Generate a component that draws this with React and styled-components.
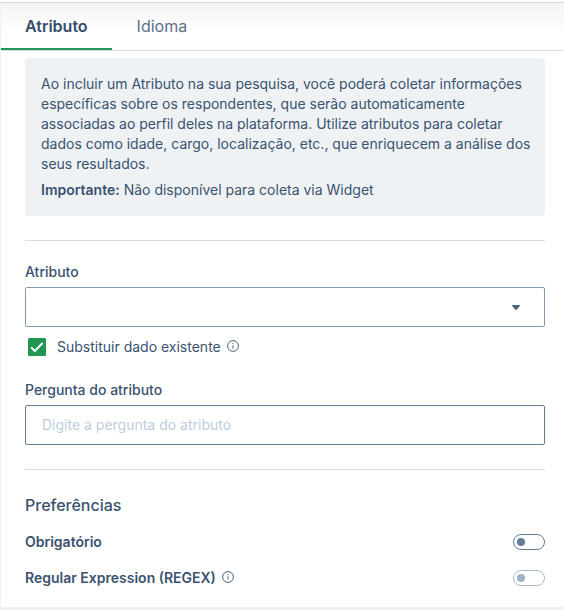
import React, { useState } from 'react';
import styled, { createGlobalStyle } from 'styled-components';

const GlobalStyle = createGlobalStyle`
    body {
        margin: 0;
        background: #eff2f5;
        color: #3a5270;
        font-family: Inter, "Liberation Sans", sans-serif;
        font-size: 14px;
        line-height: 20px;
    }
    * {
        box-sizing: border-box;
    }
`;

const Panel = styled.main`
    padding-top: 2px;
    background: #fff;
    border-left: 1px solid #edf1f6;
`;

const Tabs = styled.div`
    display: flex;
    gap: 1px;
    height: 49px;
    border-top: 1px solid #cfd9e7;
    border-bottom: 1px solid #d5deea;
    background: linear-gradient(#f4f4f5, #fff 32px);
`;

const Tab = styled.button`
    height: 47px;
    padding: 0 24px;
    border: 0;
    border-bottom: 2px solid ${(props) => (props.$active ? '#219653' : 'transparent')};
    background: none;
    color: ${(props) => (props.$active ? '#334d6e' : '#5a7089')};
    font-family: inherit;
    font-size: 16px;
    font-weight: ${(props) => (props.$active ? 600 : 400)};
    cursor: pointer;
`;

const Content = styled.div`
    padding: 7px 19px 19px 24px;
`;

const InfoBox = styled.section`
    padding: 16px 12px 16px 16px;
    border-radius: 4px;
    background: #eef2f5;
`;

const InfoText = styled.p`
    margin: 0;
    & + & {
        margin-top: 6px;
    }
`;

const Strong = styled.strong`
    font-weight: 600;
`;

const Divider = styled.hr`
    height: 1px;
    margin: 24px 0 0;
    border: 0;
    background: #d6dfea;
`;

const Field = styled.div`
    display: flex;
    flex-direction: column;
    gap: 5px;
    padding-top: 21px;
`;

const FieldLabel = styled.label`
    font-weight: 500;
`;

const SelectWrapper = styled.div`
    display: grid;
    align-items: center;
    & > * {
        grid-area: 1 / 1;
    }
`;

const Select = styled.select`
    width: 100%;
    height: 40px;
    padding: 0 40px 0 16px;
    border: 1px solid #829ab3;
    border-radius: 2px;
    background: #fff;
    color: inherit;
    font: inherit;
    appearance: none;
`;

const Caret = styled.svg`
    justify-self: end;
    margin-right: 25px;
    pointer-events: none;
`;

const Input = styled.input`
    width: 100%;
    height: 40px;
    padding: 0 16px 2px;
    border: 1px solid #637f9c;
    border-radius: 2px;
    background: #fff;
    color: inherit;
    font: inherit;
    &::placeholder {
        color: #bdcde0;
        opacity: 1;
    }
`;

const CheckRow = styled.div`
    display: flex;
    align-items: center;
    padding: 10px 0 2px 3px;
`;

const CheckWrapper = styled.span`
    display: grid;
    place-items: center;
    margin-right: 11px;
    & > * {
        grid-area: 1 / 1;
    }
`;

const Checkbox = styled.input`
    width: 18px;
    height: 18px;
    margin: 0;
    border: 1px solid #219653;
    border-radius: 1px;
    background: #fff;
    appearance: none;
    &:checked {
        background: #219653;
    }
`;

const CheckMark = styled.svg`
    pointer-events: none;
`;

const Info = styled.svg`
    flex: none;
    margin: 0 0 2px 6px;
`;

const Heading = styled.h2`
    margin: 25px 0 17px;
    font-size: 16px;
    font-weight: 500;
    line-height: 20px;
`;

const OptionRow = styled.div`
    display: flex;
    align-items: center;
    height: 20px;
    & + & {
        margin-top: 16px;
    }
`;

const OptionLabel = styled.label`
    font-weight: 600;
`;

const Switch = styled.input`
    display: flex;
    align-items: center;
    width: 32px;
    height: 16px;
    margin: 0 0 0 auto;
    padding: 0 3px;
    border: 1px solid #627d98;
    border-radius: 8px;
    background: #fff;
    appearance: none;
    &::before {
        content: '';
        width: 8px;
        height: 8px;
        border-radius: 50%;
        background: #627d98;
    }
    &:checked {
        justify-content: flex-end;
    }
    &:disabled {
        border-color: #a9bbd0;
    }
    &:disabled::before {
        background: #9fb3c8;
    }
`;

const InfoIcon = () => (
    <Info width="12" height="12" viewBox="0 0 12 12" fill="none" stroke="#4a6280" aria-hidden="true">
        <circle cx="6" cy="6" r="5.4" />
        <path d="M6 5.3v3.4M6 3v1.2" />
    </Info>
);

const App = () => {
    const [tab, setTab] = useState('Atributo');
    const [replace, setReplace] = useState(true);

    return (
        <>
            <GlobalStyle />
            <Panel>
                <Tabs role="tablist">
                    {['Atributo', 'Idioma'].map((name) => (
                        <Tab
                            key={name}
                            type="button"
                            role="tab"
                            aria-selected={tab === name}
                            $active={tab === name}
                            onClick={() => setTab(name)}
                        >
                            {name}
                        </Tab>
                    ))}
                </Tabs>
                <Content>
                    <InfoBox>
                        <InfoText>
                            Ao incluir um Atributo na sua pesquisa, você poderá coletar informações
                            específicas sobre os respondentes, que serão automaticamente associadas ao
                            perfil deles na plataforma. Utilize atributos para coletar dados como idade,
                            cargo, localização, etc., que enriquecem a análise dos seus resultados.
                        </InfoText>
                        <InfoText>
                            <Strong>Importante:</Strong> Não disponível para coleta via Widget
                        </InfoText>
                    </InfoBox>
                    <Divider />
                    <Field>
                        <FieldLabel htmlFor="attribute">Atributo</FieldLabel>
                        <SelectWrapper>
                            <Select id="attribute" defaultValue="">
                                <option value="" />
                            </Select>
                            <Caret width="8" height="5" viewBox="0 0 8 5" fill="#486581" aria-hidden="true">
                                <path d="M0.6 0h6.8c.5 0 .8.6.4 1L5 4.4c-.5.6-1.5.6-2 0L.2 1C-.2.6.1 0 .6 0z" />
                            </Caret>
                        </SelectWrapper>
                    </Field>
                    <CheckRow>
                        <CheckWrapper>
                            <Checkbox
                                id="replace"
                                type="checkbox"
                                checked={replace}
                                onChange={(e) => setReplace(e.target.checked)}
                            />
                            <CheckMark width="18" height="18" viewBox="0 0 18 18" fill="none" stroke="#fff" strokeWidth="2" aria-hidden="true">
                                <path d="M3.2 9.4l3.6 3.6 7.8-8" />
                            </CheckMark>
                        </CheckWrapper>
                        <label htmlFor="replace">Substituir dado existente</label>
                        <InfoIcon />
                    </CheckRow>
                    <Field>
                        <FieldLabel htmlFor="question">Pergunta do atributo</FieldLabel>
                        <Input id="question" type="text" placeholder="Digite a pergunta do atributo" />
                    </Field>
                    <Divider />
                    <Heading>Preferências</Heading>
                    <OptionRow>
                        <OptionLabel htmlFor="required">Obrigatório</OptionLabel>
                        <Switch id="required" type="checkbox" role="switch" />
                    </OptionRow>
                    <OptionRow>
                        <OptionLabel htmlFor="regex">Regular Expression (REGEX)</OptionLabel>
                        <InfoIcon />
                        <Switch id="regex" type="checkbox" role="switch" disabled />
                    </OptionRow>
                </Content>
            </Panel>
        </>
    );
};

export default App;
